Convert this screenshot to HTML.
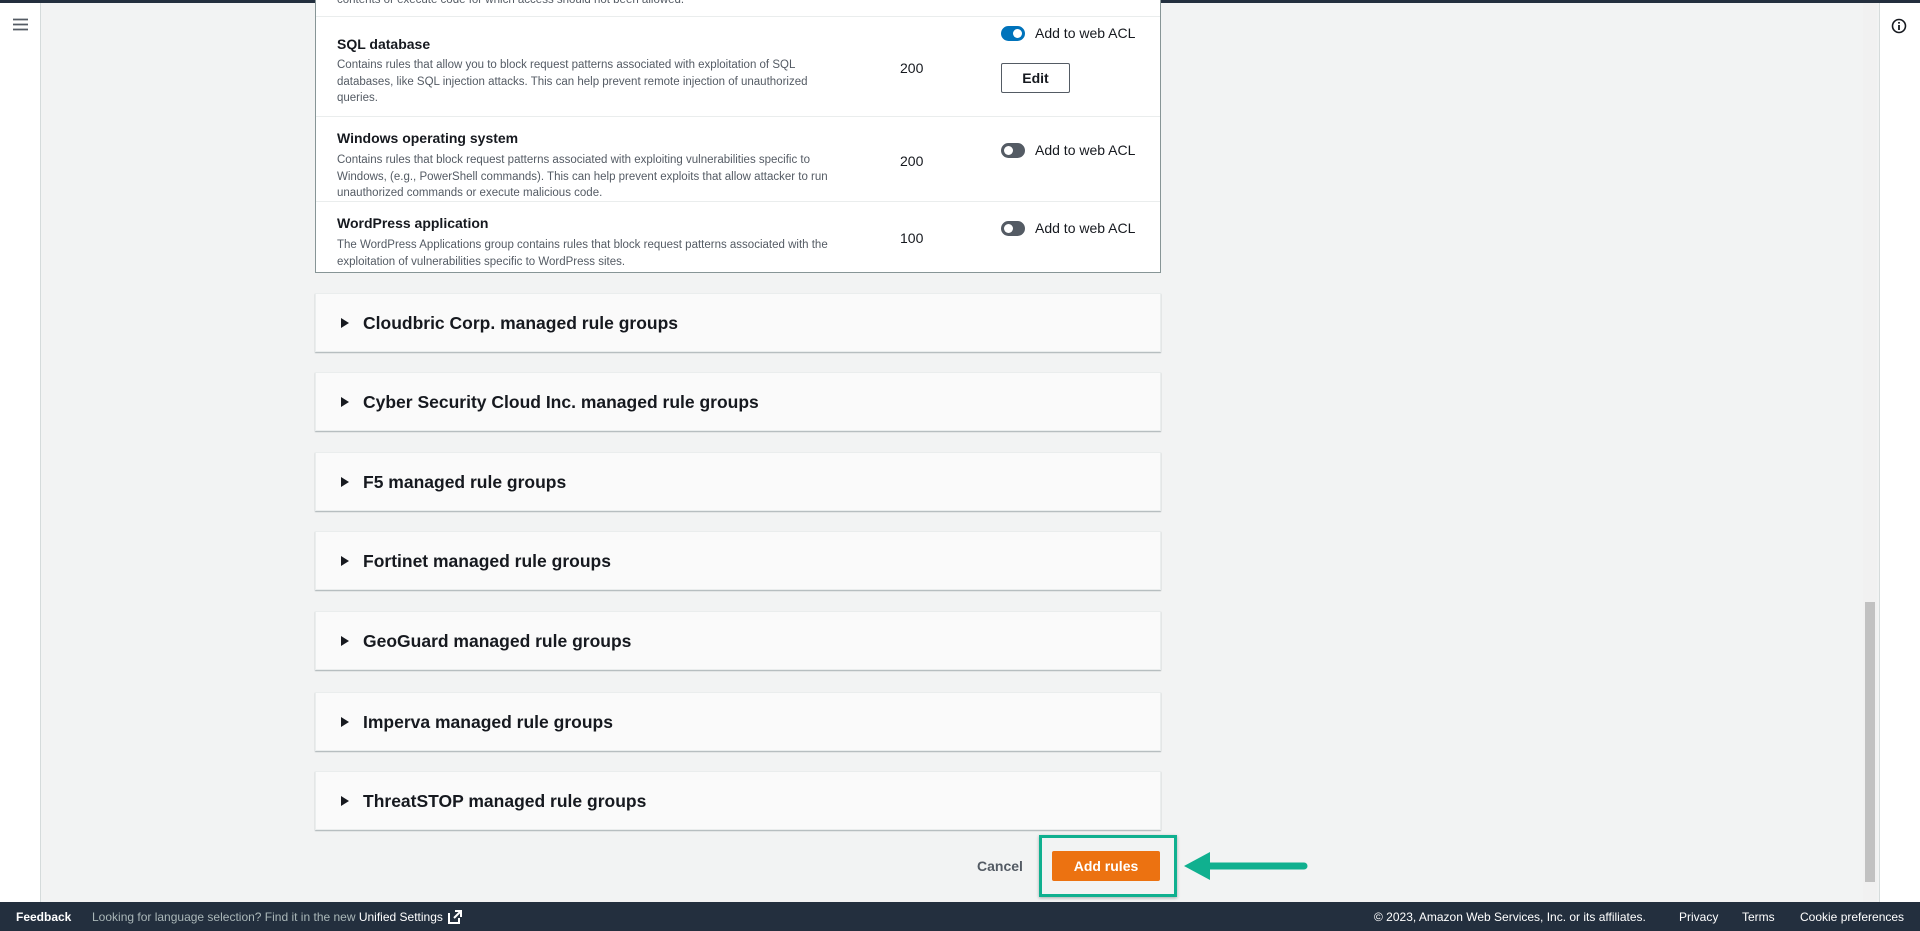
<!DOCTYPE html>
<html><head><meta charset="utf-8"><style>
*{box-sizing:border-box;margin:0;padding:0}
body{width:1920px;height:931px;overflow:hidden;background:#f2f3f3;font-family:"Liberation Sans",sans-serif;color:#16191f;position:relative}
.top{position:absolute;left:0;top:0;width:1920px;height:3px;background:#232f3e}
.lnav{position:absolute;left:0;top:3px;width:41px;height:899px;background:#fff;border-right:1px solid #d5dbdb}
.rnav{position:absolute;left:1879px;top:3px;width:41px;height:899px;background:#fff;border-left:1px solid #d5dbdb}
.sb{position:absolute;left:1863px;top:3px;width:14px;height:899px;background:#f1f1f1}
.thumb{position:absolute;left:1865px;top:602px;width:10px;height:280px;background:#c1c1c1}
.box{position:absolute;left:315px;top:0;width:846px;height:273px;background:#fff;border:1px solid #879596;border-top:none}
.row{position:absolute;left:0;width:844px;border-top:1px solid #eaeded}
.t{position:absolute;left:21px;font-size:14px;font-weight:bold}
.d{position:absolute;left:21px;font-size:11.5px;line-height:16.5px;color:#545b64;width:512px}
.n{position:absolute;left:584px;font-size:14px}
.tg{position:absolute;left:685px;width:24px;height:15px;border-radius:8px;background:#545b64}
.tg:after{content:"";position:absolute;left:3px;top:3px;width:9px;height:9px;border-radius:50%;background:#fff}
.tg.on{background:#0073bb}.tg.on:after{left:12px}
.tl{position:absolute;left:719px;font-size:14px;color:#16191f}
.edit{position:absolute;left:685px;width:69px;height:30px;border:1px solid #545b64;border-radius:2px;font-size:14px;font-weight:bold;text-align:center;line-height:28px}
.ex{position:absolute;left:315px;width:846px;height:59px;background:#fafafa;border:1px solid #eaeded;box-shadow:0 1px 1px rgba(0,28,36,.3)}
.ex span{position:absolute;left:47px;top:19px;font-size:17.5px;font-weight:bold}
.ex i{position:absolute;left:25px;top:24px;width:0;height:0;border-left:8px solid #16191f;border-top:5px solid transparent;border-bottom:5px solid transparent}
.ft{position:absolute;left:0;top:902px;width:1920px;height:29px;background:#232f3e;font-size:12px;color:#fff}
.ft span{position:absolute;top:8px}
</style></head><body>
<div class="top"></div>
<div class="lnav"><svg style="position:absolute;left:13px;top:15px" width="15" height="13"><path d="M0 1.5h15M0 6.5h15M0 11.5h15" stroke="#545b64" stroke-width="1.8"/></svg></div>
<div class="sb"></div><div class="thumb"></div>
<div class="rnav"><svg style="position:absolute;left:11px;top:15px" width="16" height="16"><circle cx="8" cy="8" r="6.5" fill="none" stroke="#16191f" stroke-width="1.6"/><path d="M8 7v5M8 4v1.6" stroke="#16191f" stroke-width="1.8"/></svg></div>
<div class="box">
<div class="d" style="top:-8px;width:700px">contents or execute code for which access should not been allowed.</div>
<div class="row" style="top:16px;height:100px">
<div class="t" style="top:19px">SQL database</div>
<div class="d" style="top:40px">Contains rules that allow you to block request patterns associated with exploitation of SQL databases, like SQL injection attacks. This can help prevent remote injection of unauthorized queries.</div>
<div class="n" style="top:43px">200</div>
<div class="tg on" style="top:9px"></div><div class="tl" style="top:8px">Add to web ACL</div>
<div class="edit" style="top:46px">Edit</div>
</div>
<div class="row" style="top:116px;height:85px">
<div class="t" style="top:13px">Windows operating system</div>
<div class="d" style="top:35px;width:520px">Contains rules that block request patterns associated with exploiting vulnerabilities specific to Windows, (e.g., PowerShell commands). This can help prevent exploits that allow attacker to run unauthorized commands or execute malicious code.</div>
<div class="n" style="top:36px">200</div>
<div class="tg" style="top:26px"></div><div class="tl" style="top:25px">Add to web ACL</div>
</div>
<div class="row" style="top:201px;height:71px">
<div class="t" style="top:13px">WordPress application</div>
<div class="d" style="top:35px">The WordPress Applications group contains rules that block request patterns associated with the exploitation of vulnerabilities specific to WordPress sites.</div>
<div class="n" style="top:28px">100</div>
<div class="tg" style="top:19px"></div><div class="tl" style="top:18px">Add to web ACL</div>
</div>
</div>
<div class="ex" style="top:293px"><i></i><span>Cloudbric Corp. managed rule groups</span></div>
<div class="ex" style="top:372px"><i></i><span>Cyber Security Cloud Inc. managed rule groups</span></div>
<div class="ex" style="top:452px"><i></i><span>F5 managed rule groups</span></div>
<div class="ex" style="top:531px"><i></i><span>Fortinet managed rule groups</span></div>
<div class="ex" style="top:611px"><i></i><span>GeoGuard managed rule groups</span></div>
<div class="ex" style="top:692px"><i></i><span>Imperva managed rule groups</span></div>
<div class="ex" style="top:771px"><i></i><span>ThreatSTOP managed rule groups</span></div>
<div style="position:absolute;left:977px;top:858px;font-size:14px;font-weight:bold;color:#545b64">Cancel</div>
<div style="position:absolute;left:1052px;top:851px;width:108px;height:30px;background:#ec7211;border-radius:2px;color:#fff;font-size:14px;font-weight:bold;text-align:center;line-height:30px">Add rules</div>
<div style="position:absolute;left:1039px;top:835px;width:138px;height:62px;border:3px solid #10b08f;box-shadow:0 1px 3px rgba(0,0,0,.3)"></div>
<svg style="position:absolute;left:1180px;top:848px" width="130" height="36"><path d="M124 18H28" stroke="#10b08f" stroke-width="7" stroke-linecap="round"/><path d="M4 18L30 4V32Z" fill="#10b08f"/></svg>
<div class="ft">
<span style="left:16px;font-weight:bold">Feedback</span>
<span style="left:92px;color:#aab7b8">Looking for language selection? Find it in the new <b style="color:#fff;font-weight:normal">Unified Settings</b></span>
<svg style="position:absolute;left:448px;top:8px" width="14" height="14"><path d="M1 3v10h10V8M7 1h6v6M13 1L6 8" stroke="#fff" stroke-width="2" fill="none"/></svg>
<span style="left:1374px">© 2023, Amazon Web Services, Inc. or its affiliates.</span>
<span style="left:1679px">Privacy</span>
<span style="left:1742px">Terms</span>
<span style="left:1800px">Cookie preferences</span>
</div>
</body></html>
